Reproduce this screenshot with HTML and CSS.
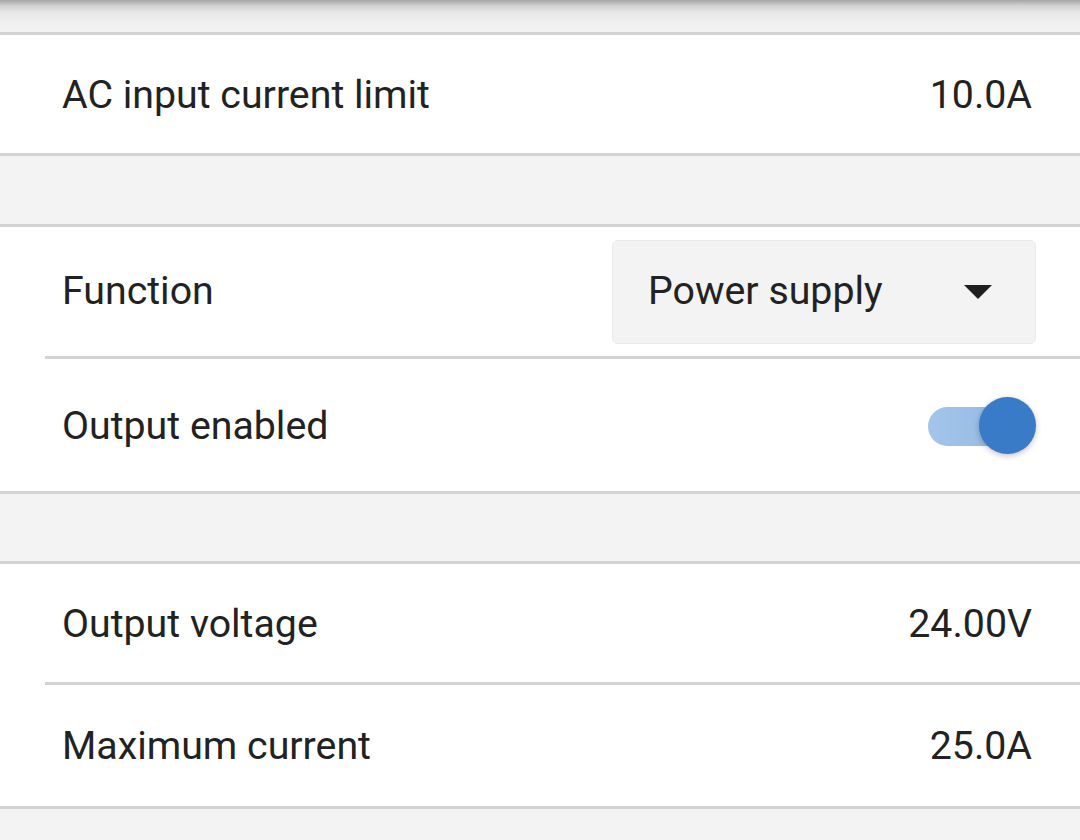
FILE: index.html
```html
<!DOCTYPE html>
<html>
<head>
<meta charset="utf-8">
<link rel="stylesheet" href="styles.css">
</head>
<body>
<div class="page">
  <div class="topshade"></div>
  <section class="group">
    <div class="row row-a">
      <span class="label">AC input current limit</span>
      <span class="value">10.0A</span>
    </div>
  </section>
  <div class="gap"></div>
  <section class="group">
    <div class="row row-func">
      <span class="label">Function</span>
      <div class="select">
        <span class="select-text">Power supply</span>
        <svg class="caret" width="28" height="14" viewBox="0 0 28 14"><path d="M0 0 L28 0 L14 14 Z" fill="#1f1f1f"/></svg>
      </div>
    </div>
    <div class="sep"></div>
    <div class="row row-toggle">
      <span class="label">Output enabled</span>
      <div class="switch"><div class="track"></div><div class="thumb"></div></div>
    </div>
  </section>
  <div class="gap gap2"></div>
  <section class="group">
    <div class="row row-v">
      <span class="label">Output voltage</span>
      <span class="value">24.00V</span>
    </div>
    <div class="sep"></div>
    <div class="row row-c">
      <span class="label">Maximum current</span>
      <span class="value">25.0A</span>
    </div>
  </section>
</div>
</body>
</html>
```

FILE: styles.css
```css
html, body {
  margin: 0;
  padding: 0;
  background: #f3f3f3;
}
body {
  width: 1080px;
  height: 840px;
  overflow: hidden;
  font-family: Roboto, "Noto Sans", sans-serif;
  color: #222222;
}
.page {
  display: flex;
  flex-direction: column;
}
.topshade {
  height: 32px;
  background: linear-gradient(to bottom, #a6a6a6 0px, #d2d2d2 6px, #e6e6e6 12px, #f0f0f0 22px, #f2f2f2 32px);
}
.group {
  background: #ffffff;
  border-top: 3px solid #d3d3d3;
  border-bottom: 3px solid #d3d3d3;
  display: flex;
  flex-direction: column;
}
.row {
  display: flex;
  align-items: center;
  justify-content: space-between;
  box-sizing: border-box;
  padding: 3px 48px 0 62px;
  font-size: 39.3px;
  line-height: 1;
}
.row-a { height: 118px; }
.row-func { height: 129px; padding-right: 44px; padding-top: 0; }
.row-toggle { height: 132px; padding-right: 44px; }
.row-v { height: 118px; }
.row-c { height: 121px; }
.sep {
  height: 3px;
  margin-left: 45px;
  background: #d3d3d3;
}
.gap {
  height: 68px;
}
.gap2 {
  height: 67px;
}
.select {
  width: 424px;
  height: 104px;
  box-sizing: border-box;
  background: #f3f3f3;
  border: 1px solid #e9e9e9;
  border-radius: 6px;
  display: flex;
  align-items: center;
  justify-content: space-between;
  padding: 0 43px 0 35px;
}
.select-text {
  font-size: 39.3px;
  color: #222222;
}
.caret {
  display: block;
}
.switch {
  position: relative;
  width: 108px;
  height: 58px;
}
.track {
  position: absolute;
  left: 0;
  top: 9px;
  width: 92px;
  height: 39px;
  border-radius: 20px;
  background: linear-gradient(to right, #a3c5ea, #93b8e2);
}
.thumb {
  position: absolute;
  right: 0;
  top: -1px;
  width: 57px;
  height: 57px;
  border-radius: 50%;
  background: #3a7bc8;
  box-shadow: 0 2px 6px rgba(0,0,0,0.22), 0 0 2px rgba(0,0,0,0.08);
}
```
